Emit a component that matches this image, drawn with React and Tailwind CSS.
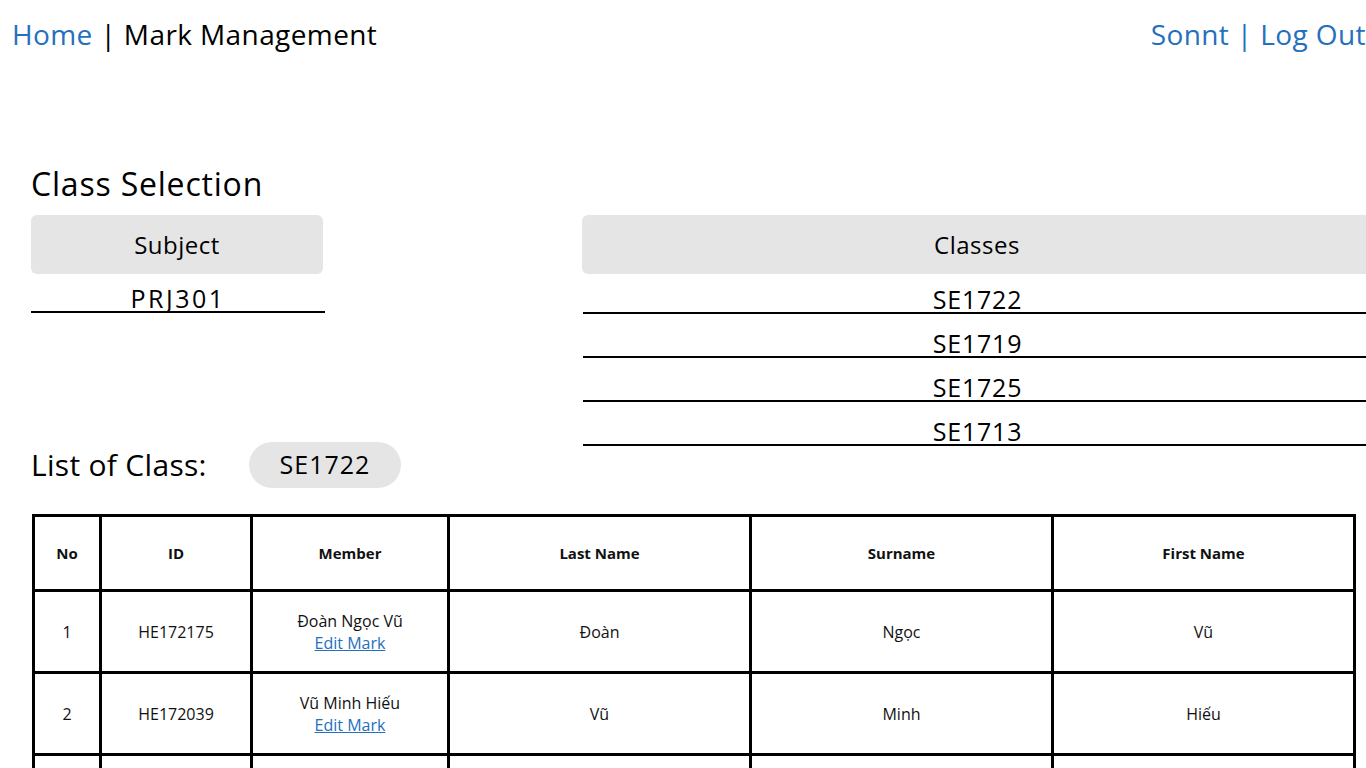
const classes = ['SE1722', 'SE1719', 'SE1725', 'SE1713'];

const students = [
  { no: 1, id: 'HE172175', member: 'Đoàn Ngọc Vũ', last: 'Đoàn', sur: 'Ngọc', first: 'Vũ' },
  { no: 2, id: 'HE172039', member: 'Vũ Minh Hiếu', last: 'Vũ', sur: 'Minh', first: 'Hiếu' },
  { no: '', id: '', member: '', last: '', sur: '', first: '' },
];

const font = { fontFamily: '"Open Sans", "Noto Sans", sans-serif' };

export default function App() {
  return (
    <div className="w-full overflow-hidden bg-white text-black" style={font}>
      <header className="flex items-start justify-between pl-3 pt-[15px] text-[28px] leading-[38px] tracking-[0.4px]">
        <div>
          <a href="#" className="text-[#2470bd]">Home</a>
          <span> | Mark Management</span>
        </div>
        <div className="text-[#2470bd] whitespace-nowrap">Sonnt | Log Out</div>
      </header>

      <div className="pl-[31px]">
        <h1 className="mt-[111px] text-[32px] leading-[40px] tracking-[0.8px]">Class Selection</h1>

        <div className="mt-[11px] flex items-start">
          <div className="flex w-[551px] shrink-0 flex-col">
            <div className="flex h-[59px] w-[292px] items-center justify-center rounded-md bg-[#e5e5e5] text-[24px] tracking-[0.5px]">
              Subject
            </div>
            <div className="mt-[11px] w-[294px] border-b-2 border-black text-center text-[25px] leading-[26px] tracking-[2.5px]">
              PRJ301
            </div>
            <div className="mt-[129px] flex items-center">
              <span className="w-[218px] text-[30px] leading-[38px] tracking-[0.3px]">List of Class:</span>
              <span className="flex h-[46px] w-[152px] items-center justify-center rounded-full bg-[#e5e5e5] text-[25px] tracking-[1px]">
                SE1722
              </span>
            </div>
          </div>

          <div className="flex w-[790px] shrink-0 flex-col">
            <div className="flex h-[59px] items-center justify-center rounded-md bg-[#e5e5e5] text-[24px] tracking-[0.5px]">
              Classes
            </div>
            {classes.map((c, i) => (
              <div
                key={c}
                className={`ml-px border-b-2 border-black text-center text-[25px] leading-[26px] tracking-[0.8px] ${i === 0 ? 'pt-[12px]' : 'pt-[16px]'}`}
              >
                {c}
              </div>
            ))}
          </div>
        </div>

        <table className="mt-[26px] ml-px w-[1323px] table-fixed border-collapse border-[3px] border-black text-[16px] text-[#111]">
          <colgroup>
            <col className="w-[67px]" />
            <col className="w-[151px]" />
            <col className="w-[197px]" />
            <col className="w-[302px]" />
            <col className="w-[302px]" />
            <col className="w-[302px]" />
          </colgroup>
          <thead>
            <tr className="h-[75px]">
              {['No', 'ID', 'Member', 'Last Name', 'Surname', 'First Name'].map((h) => (
                <th key={h} className="border-[3px] border-black text-center text-[15px] font-bold">
                  {h}
                </th>
              ))}
            </tr>
          </thead>
          <tbody>
            {students.map((s, i) => (
              <tr key={i} className="h-[82px]">
                <td className="border-[3px] border-black text-center">{s.no}</td>
                <td className="border-[3px] border-black text-center">{s.id}</td>
                <td className="border-[3px] border-black text-center leading-[22px]">
                  {s.member && (
                    <>
                      <div>{s.member}</div>
                      <a href="#" className="text-[#2470bd] underline">Edit Mark</a>
                    </>
                  )}
                </td>
                <td className="border-[3px] border-black text-center">{s.last}</td>
                <td className="border-[3px] border-black text-center">{s.sur}</td>
                <td className="border-[3px] border-black text-center">{s.first}</td>
              </tr>
            ))}
          </tbody>
        </table>
      </div>
    </div>
  );
}
